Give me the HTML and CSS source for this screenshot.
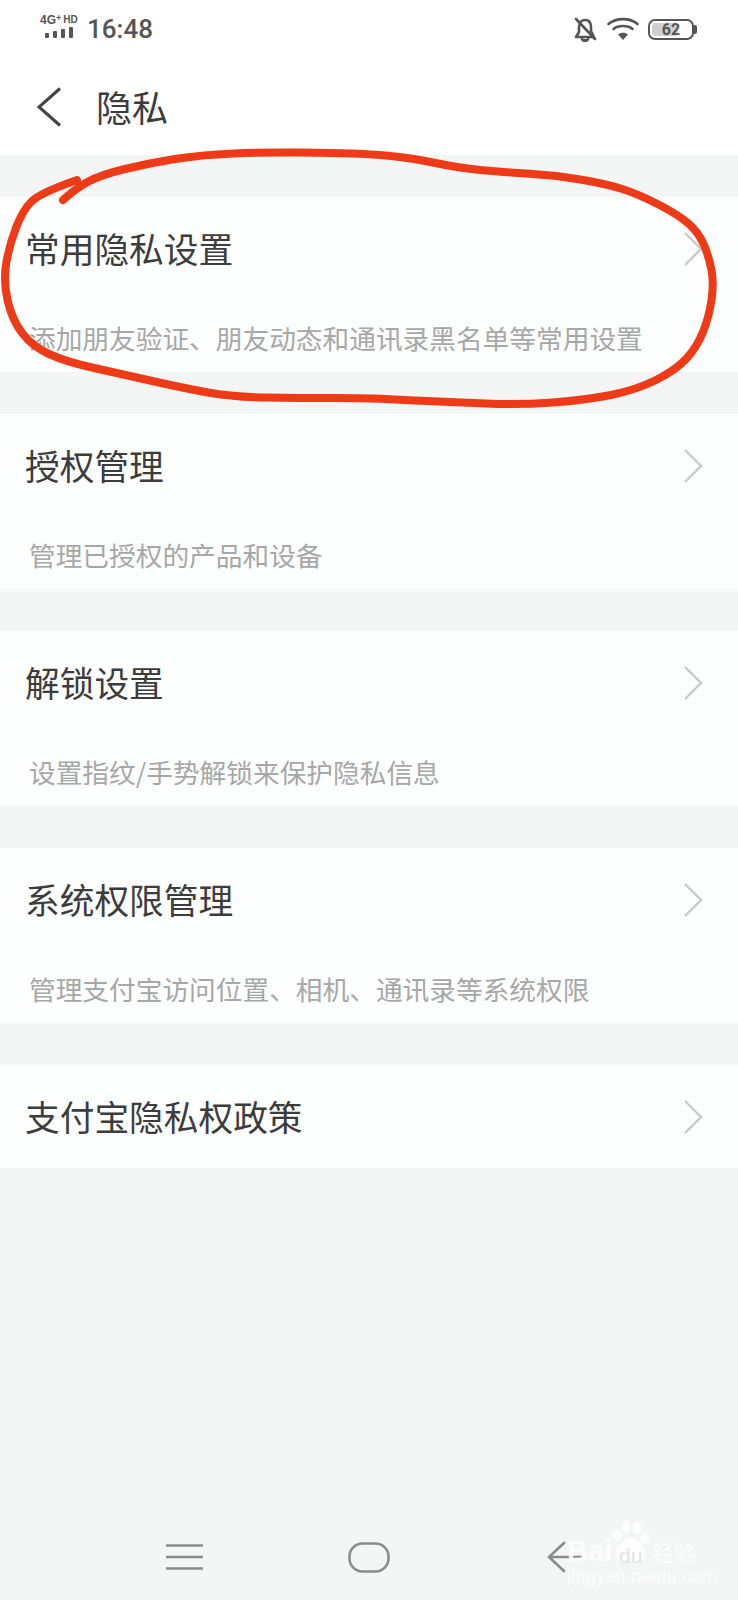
FILE: index.html
```html
<!DOCTYPE html>
<html lang="zh-CN">
<head>
    <meta charset="UTF-8">
    <meta name="viewport" content="width=device-width, initial-scale=1.0">
    <title>隐私</title>
    <link rel="stylesheet" href="styles.css">
</head>
<body>
    <div class="top">
        <div class="status">
            <div class="signal">
                <div class="net">4G<span class="plus">+</span><span class="hd">HD</span></div>
                <div class="bars"><i class="b1"></i><i class="b2"></i><i class="b3"></i><i class="b4"></i></div>
            </div>
            <span class="time">16:48</span>
            <div class="status-right">
                <svg class="bell" width="24" height="25" viewBox="0 0 24 25" fill="none" stroke="#555" stroke-width="2.6" stroke-linecap="round" stroke-linejoin="round">
                    <path d="M3 2 L22 22"/>
                    <path d="M6 10 C6 5 9 3 12 3 C16 3 18 6 18 10 L18 14 L21 20 L3 20 L6 15 Z"/>
                    <path d="M9 22 C10 24.5 14 24.5 15 22" fill="#555"/>
                </svg>
                <svg class="wifi" width="32" height="24" viewBox="0 0 32 24" fill="none" stroke="#555" stroke-width="2.6" stroke-linecap="round">
                    <path d="M1.5 7 C9 0.5 23 0.5 30.5 7"/>
                    <path d="M6.5 12 C11 8 21 8 25.5 12"/>
                    <path d="M16 23 L11 17.5 C14 15 18 15 21 17.5 Z" fill="#555" stroke="none"/>
                </svg>
                <div class="battery">
                    <div class="battery-level"></div>
                    <span>62</span>
                </div>
                <div class="battery-nub"></div>
            </div>
        </div>
        <div class="title-bar">
            <svg class="back" width="26" height="40" viewBox="0 0 26 40" fill="none" stroke="#444" stroke-width="3">
                <path d="M24 1.5 L3 20 L24 38.5"/>
            </svg>
            <h1>隐私</h1>
        </div>
    </div>

    <div class="list">
        <div class="card">
            <div class="row">
                <span class="name">常用隐私设置</span>
                <svg class="arrow" width="20" height="34" viewBox="0 0 20 34" fill="none" stroke="#c9c9c9" stroke-width="2.4"><path d="M2 1 L18 17 L2 33"/></svg>
            </div>
            <div class="desc">添加朋友验证、朋友动态和通讯录黑名单等常用设置</div>
        </div>
        <div class="card">
            <div class="row">
                <span class="name">授权管理</span>
                <svg class="arrow" width="20" height="34" viewBox="0 0 20 34" fill="none" stroke="#c9c9c9" stroke-width="2.4"><path d="M2 1 L18 17 L2 33"/></svg>
            </div>
            <div class="desc">管理已授权的产品和设备</div>
        </div>
        <div class="card">
            <div class="row">
                <span class="name">解锁设置</span>
                <svg class="arrow" width="20" height="34" viewBox="0 0 20 34" fill="none" stroke="#c9c9c9" stroke-width="2.4"><path d="M2 1 L18 17 L2 33"/></svg>
            </div>
            <div class="desc">设置指纹/手势解锁来保护隐私信息</div>
        </div>
        <div class="card">
            <div class="row">
                <span class="name">系统权限管理</span>
                <svg class="arrow" width="20" height="34" viewBox="0 0 20 34" fill="none" stroke="#c9c9c9" stroke-width="2.4"><path d="M2 1 L18 17 L2 33"/></svg>
            </div>
            <div class="desc">管理支付宝访问位置、相机、通讯录等系统权限</div>
        </div>
        <div class="card">
            <div class="row last">
                <span class="name">支付宝隐私权政策</span>
                <svg class="arrow" width="20" height="34" viewBox="0 0 20 34" fill="none" stroke="#c9c9c9" stroke-width="2.4"><path d="M2 1 L18 17 L2 33"/></svg>
            </div>
        </div>
    </div>

    <div class="nav">
        <svg class="nav-menu" width="37" height="28" viewBox="0 0 37 28" fill="none" stroke="#8c8c8c" stroke-width="2.6">
            <path d="M0 2.5 H37 M0 14 H37 M0 25.5 H37"/>
        </svg>
        <svg class="nav-home" width="42" height="31" viewBox="0 0 42 31" fill="none" stroke="#8c8c8c" stroke-width="2.6">
            <rect x="1.5" y="1.5" width="39" height="28" rx="13"/>
        </svg>
        <svg width="35" height="32" viewBox="0 0 35 32" fill="none" stroke="#8c8c8c" stroke-width="2.6" stroke-linecap="round">
            <path d="M17 2 L2 16 L17 30 M2 16 H34"/>
        </svg>
    </div>

    <!-- hand drawn red circle on top of the first card -->
    <svg class="scribble" width="738" height="420" viewBox="0 0 738 420" fill="none" stroke="#ee3a16" stroke-width="8" stroke-linecap="round" stroke-linejoin="round">
        <path d="M63 200 Q75 189 87.5 182 Q100 175 125 169 Q150 163 175 159 Q200 155 233.5 153.5 Q267 152 300 152.5 Q333 153 351 153.5 Q369 154 390.5 156 Q412 158 435.5 163 Q459 168 480.5 170 Q502 172 527 173.5 Q552 175 577 179 Q602 183 619 188 Q636 193 657.5 204 Q679 215 689 224 Q699 233 704 245 Q709 257 711.5 270 Q714 283 711.5 300 Q709 317 703 332 Q697 347 686.5 358.5 Q676 370 656 380 Q636 390 611 395 Q586 400 552.5 402.5 Q519 405 485.5 403.5 Q452 402 427 401 Q402 400 385.5 399 Q369 398 334.5 398 Q300 398 266.5 397.5 Q233 397 208 392.5 Q183 388 150 380.5 Q117 373 92 367.5 Q67 362 50 354.5 Q33 347 22.5 333.5 Q12 320 7.5 300 Q3 280 6.5 261.5 Q10 243 16.5 226.5 Q23 210 31.5 201.5 Q40 193 77 180"/>
    </svg>

    <!-- watermark -->
    <div class="watermark">
        <svg class="paw" width="40" height="44" viewBox="0 0 40 44" fill="#fff" fill-opacity="0.8">
            <ellipse cx="6" cy="16" rx="4.5" ry="6" transform="rotate(-25 6 16)"/>
            <ellipse cx="15" cy="8" rx="4.5" ry="6.5"/>
            <ellipse cx="26" cy="9" rx="4.5" ry="6.5"/>
            <ellipse cx="34" cy="19" rx="4.5" ry="6" transform="rotate(25 34 19)"/>
            <path d="M20 18 C26 18 29 25 33 29 C38 35 34 43 26 42.500 C22 42 18 42 14 42.500 C6 43 2 35 7 29 C11 25 14 18 20 18 Z"/>
        </svg>
        <span class="wm-bai">Bai</span>
        <span class="wm-du">du</span>
        <span class="wm-cn">经验</span>
        <span class="wm-url">jingyan.baidu.com</span>
    </div>
</body>
</html>
```

FILE: styles.css
```css
* {
    box-sizing: border-box;
}
body {
    margin: 0;
    height: 1600px;
    display: flex;
    flex-direction: column;
    position: relative;
    overflow: hidden;
    background: #f4f5f5;
    color: #3c3c3c;
    font-family: "Noto Sans CJK SC", "Noto Sans", sans-serif;
}
.top {
    height: 155px;
    background: #ffffff;
}
.status {
    height: 58px;
    display: flex;
    align-items: center;
    padding: 0 41px 0 40px;
    color: #555;
}
.signal {
    width: 47px;
    margin-bottom: 5px;
}
.net {
    display: flex;
    align-items: flex-start;
    font-family: "Liberation Sans", sans-serif;
    font-size: 12px;
    line-height: 10px;
    font-weight: bold;
    white-space: nowrap;
}
.plus {
    font-size: 9px;
    line-height: 7px;
}
.hd {
    font-size: 10px;
    line-height: 9px;
    margin-left: 2px;
}
.bars {
    display: flex;
    align-items: flex-end;
    gap: 4px;
    height: 12px;
    margin: 1px 0 0 5px;
}
.bars i {
    display: block;
    width: 4px;
    background: #555;
    border-radius: 1px;
}
.b1 { height: 5px; }
.b2 { height: 7px; }
.b3 { height: 9px; }
.b4 { height: 11px; }
.time {
    font-family: Roboto, sans-serif;
    font-size: 26px;
    font-weight: 500;
}
.status-right {
    margin-left: auto;
    display: flex;
    align-items: center;
}
.bell {
    margin-right: 10px;
}
.wifi {
    margin-right: 9px;
}
.battery {
    width: 46px;
    height: 21px;
    border: 2px solid #555;
    border-radius: 7px;
    position: relative;
    padding: 2px;
    display: flex;
    justify-content: center;
    align-items: center;
    font-family: Roboto, sans-serif;
    font-size: 16px;
    font-weight: bold;
}
.battery-level {
    position: absolute;
    left: 2px;
    top: 2px;
    bottom: 2px;
    width: 62%;
    background: #cfcfcf;
    border-radius: 4px;
}
.battery span {
    position: relative;
}
.battery-nub {
    width: 3px;
    height: 9px;
    background: #555;
    border-radius: 0 2px 2px 0;
}
.title-bar {
    display: flex;
    align-items: center;
    height: 98px;
    padding-left: 36px;
}
.back {
    margin-right: 34px;
}
h1 {
    margin: 0 0 3px;
    font-size: 36px;
    font-weight: 400;
    line-height: 1;
}
.list {
    display: flex;
    flex-direction: column;
    gap: 42px;
    padding-top: 42px;
}
.card {
    background: #fdfefe;
}
.row {
    height: 106px;
    display: flex;
    align-items: center;
    justify-content: space-between;
    padding: 0 35px 2px 25px;
    border-bottom: 1px solid #fbfcfc;
}
.row.last {
    height: 103px;
    padding-bottom: 0;
    border-bottom: none;
}
.name {
    font-size: 34.7px;
    line-height: 1;
}
.desc {
    height: 69px;
    padding-left: 29px;
    font-size: 26.7px;
    line-height: 70px;
    color: #a6a8a8;
    white-space: nowrap;
}
.nav {
    margin-top: auto;
    height: 88px;
    padding: 2px 0 0 166px;
    display: flex;
    align-items: center;
}
.nav-menu {
    margin-right: 145px;
}
.nav-home {
    margin-right: 157px;
}
.scribble {
    position: absolute;
    left: 0;
    top: 0;
    pointer-events: none;
}
.watermark {
    position: absolute;
    left: 567px;
    top: 1519px;
    width: 132px;
    height: 66px;
    color: rgba(255, 255, 255, 0.85);
    font-family: "Liberation Sans", sans-serif;
    white-space: nowrap;
}
.watermark span {
    position: absolute;
}
.paw {
    position: absolute;
    left: 44px;
    top: 0;
}
.wm-bai {
    left: 0;
    top: 18px;
    font-size: 29px;
    line-height: 28px;
    font-weight: bold;
}
.wm-du {
    left: 52px;
    top: 26px;
    font-size: 21px;
    line-height: 22px;
    color: #e2e4e4;
}
.wm-cn {
    left: 85px;
    top: 20px;
    font-family: "Noto Sans CJK SC", sans-serif;
    font-size: 22px;
    line-height: 24px;
}
.wm-url {
    left: 0;
    top: 47px;
    font-size: 18px;
    line-height: 20px;
    letter-spacing: 0.3px;
}
```
